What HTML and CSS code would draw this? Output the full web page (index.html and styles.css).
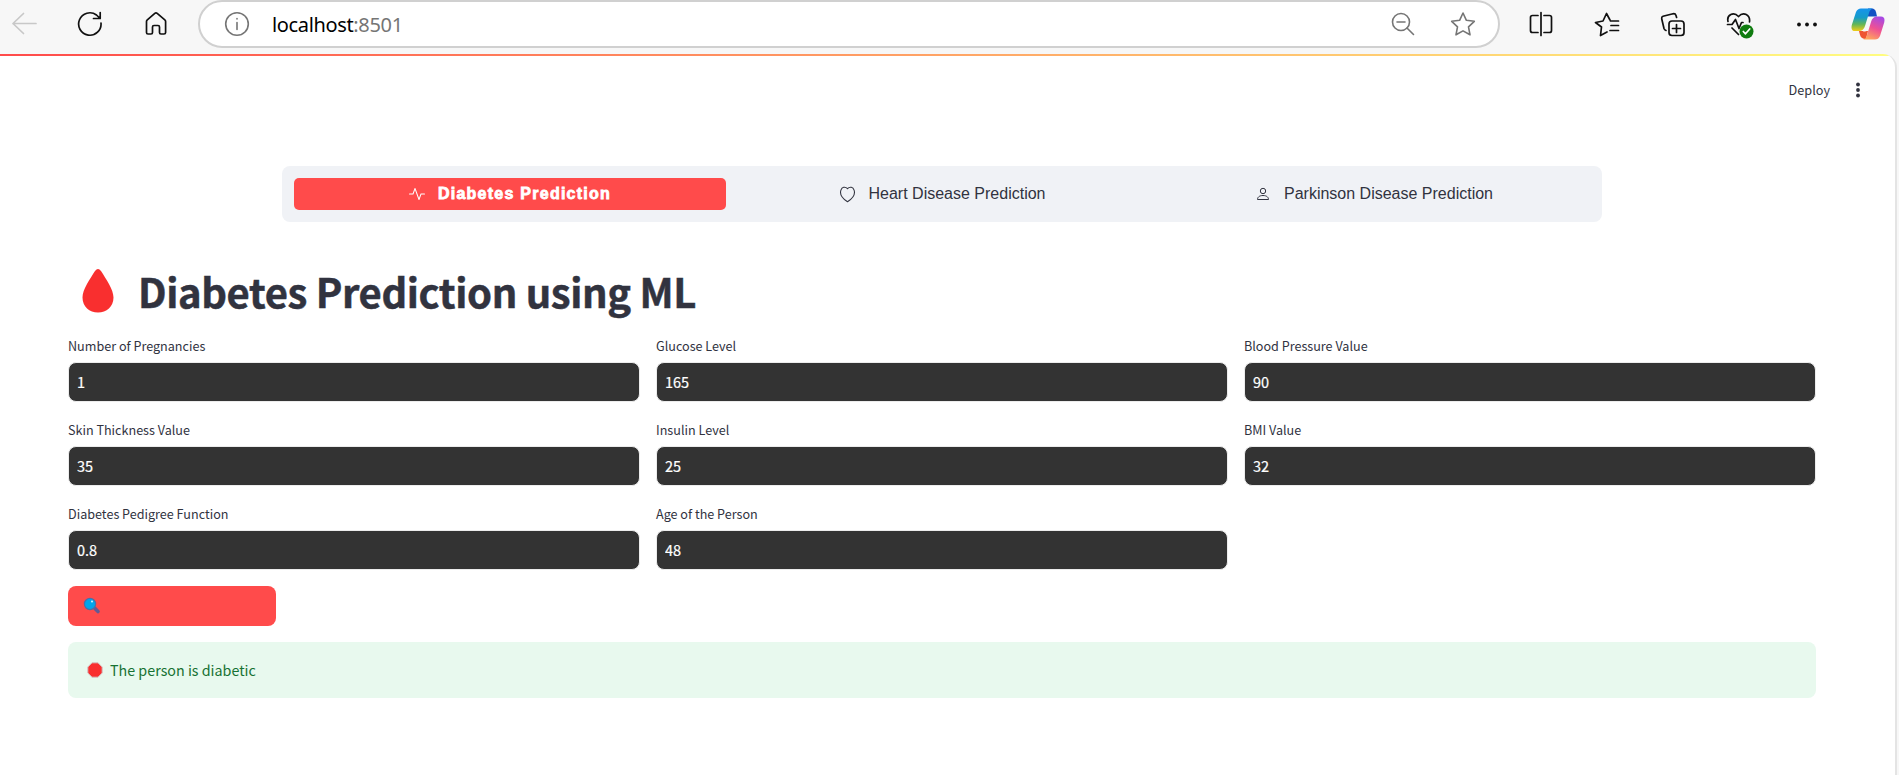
FILE: index.html
```html
<!DOCTYPE html>
<html lang="en">
<head>
<meta charset="utf-8">
<title>Diabetes Prediction</title>
<link rel="stylesheet" href="styles.css">
</head>
<body>
<header class="toolbar">
  <div class="nav-icons">
    <svg class="back" width="26" height="26" viewBox="0 0 26 26"><path d="M25 12.500H2M12.500 2.500L2 12.500l10.500 10"/></svg>
    <svg width="26" height="26" viewBox="0 0 26 26"><path d="M24 12A11.200 11.200 0 1 1 19.500 4L23 7.300M23.200 1.500V7.500H16.500"/></svg>
    <svg width="26" height="26" viewBox="0 0 26 26"><path d="M3.500 10.500Q3.500 9.500 4.300 8.800L11.800 2.300Q13 1.300 14.200 2.300L21.800 8.800Q22.600 9.500 22.600 10.500V21.500Q22.600 23 21 23H18Q16.500 23 16.500 21.500V16Q16.500 14.500 15 14.500H11Q9.500 14.500 9.500 16V21.500Q9.500 23 8 23H5Q3.500 23 3.500 21.500Z"/></svg>
  </div>
  <div class="address">
    <svg class="grey" width="26" height="26" viewBox="0 0 26 26"><circle cx="13" cy="13" r="11.300"/><path d="M13 11.500v7M13 7.500v.5"/></svg>
    <span class="url">localhost<span class="port">:8501</span></span>
    <svg class="grey zoomout" width="26" height="26" viewBox="0 0 26 26"><circle cx="11" cy="11" r="8.500"/><path d="M7 11h8M17 17l6.500 6.500"/></svg>
    <svg class="grey star" width="26" height="26" viewBox="0 0 26 26"><path d="M13 2l3.400 7.300 7.900 1-5.800 5.500 1.500 8-7-3.900-7 3.900 1.500-8-5.800-5.500 7.900-1z"/></svg>
  </div>
  <div class="tools">
    <svg width="26" height="26" viewBox="0 0 26 26"><path d="M10 4.500H4.500Q2.500 4.500 2.500 6.500V19.500Q2.500 21.500 4.500 21.500H10M13 1.500v23M16 4.500h5.500Q23.500 4.500 23.500 6.500V19.500Q23.500 21.500 21.500 21.500H16"/></svg>
    <svg width="26" height="26" viewBox="0 0 26 26"><path d="M16.500 10H24.500M17 14.500H24.500M16 19.500H24.500M13 21l-6.500 3.500 1-8.500L1.500 11.500l7.500-1.500L12.500 2.500L16 9"/></svg>
    <svg width="26" height="26" viewBox="0 0 26 26"><rect x="9" y="10" width="15" height="14.500" rx="3"/><path d="M16.500 13.500v8M12.500 17.500h8M6 19.500Q4.500 19 4 17.500L1.700 7.800Q1.300 6 3 5.300L13 2.800Q15.300 2.300 16 4.500L16.600 6.500"/></svg>
    <svg width="28" height="28" viewBox="0 0 28 28"><path d="M2 10.500C.5 4 7.500 0 12.500 5.500C17.500 0 24.500 4 23.500 11M1.500 13.500H6L9.500 8.500 13 17.500 15.500 11.500H17M6 17L12.500 23.500"/><circle class="ok" cx="20.500" cy="20.500" r="7"/><path class="tick" d="M17.300 20.500l2.200 2.300 4.200-4.800"/></svg>
    <svg class="dots" width="26" height="26" viewBox="0 0 26 26"><circle cx="5" cy="13.500" r="1.900"/><circle cx="13" cy="13.500" r="1.900"/><circle cx="21" cy="13.500" r="1.900"/></svg>
    <svg class="copilot" width="34" height="32" viewBox="0 0 34 32">
      <defs>
        <linearGradient id="cool" x1="0" y1="0" x2="0" y2="1"><stop offset="0" stop-color="#1693ed"/><stop offset=".4" stop-color="#169cc8"/><stop offset=".7" stop-color="#62b658"/><stop offset="1" stop-color="#f2cc16"/></linearGradient>
        <linearGradient id="warm" x1=".7" y1="0" x2=".3" y2="1"><stop offset="0" stop-color="#a849e3"/><stop offset=".5" stop-color="#ef5193"/><stop offset="1" stop-color="#ffa75b"/></linearGradient>
      </defs>
      <path fill="#1250c4" d="M17 .5H21Q24 .5 25 4L26 8.500H17Z"/>
      <path fill="#ee5432" d="M8 23H17L15 31Q10 31 9 27Z"/>
      <path fill="url(#cool)" d="M10 .5H22Q19 1 18 5L14 18Q12.500 23 8 23H4Q-.5 23 .8 17L5 4Q6.500 .5 10 .5Z"/>
      <path fill="url(#warm)" d="M24 31.500H12Q15 31 16 27L20 14Q21.500 8.500 26 8.500H30Q34.500 8.500 33.200 14.500L29 28Q27.500 31.500 24 31.500Z"/>
      <path fill="#f7f7f7" d="M18 9H22Q19.800 10.500 19 14L16.500 22Q15.800 23.500 12 23.500Q14 22 15 18Z"/>
    </svg>
  </div>
</header>
<main class="page">
  <div class="rainbow"></div>
  <div class="app-bar">
    <span class="deploy">Deploy</span>
    <svg width="6" height="16" viewBox="0 0 6 16"><circle cx="3" cy="2.500" r="1.900"/><circle cx="3" cy="8" r="1.900"/><circle cx="3" cy="13.500" r="1.900"/></svg>
  </div>
  <nav class="tabs">
    <a class="tab active"><svg width="16" height="16" viewBox="0 0 16 16"><path fill="currentColor" d="M6 2a.5.5 0 0 1 .47.33L10 12.040l1.530-4.210A.5.5 0 0 1 12 7.500h3.500a.5.5 0 0 1 0 1h-3.150l-1.880 5.170a.5.5 0 0 1-.94 0L6 3.960 4.470 8.170A.5.5 0 0 1 4 8.500H.5a.5.5 0 0 1 0-1h3.150l1.880-5.170A.5.5 0 0 1 6 2"/></svg><span>Diabetes Prediction</span></a>
    <a class="tab heart"><svg width="17" height="17" viewBox="0 0 16 16"><path class="line" d="M8 14.800C-4 7 3.500-2.500 8 2.500C12.500-2.500 20 7 8 14.800Z"/></svg><span>Heart Disease Prediction</span></a>
    <a class="tab person"><svg width="16" height="16" viewBox="0 0 16 16"><circle class="line" cx="8" cy="5" r="2.700"/><path class="line" d="M2.500 13.500C2.500 11.500 4 9.500 8 9.500S13.500 11.500 13.500 13.500Z"/></svg><span>Parkinson Disease Prediction</span></a>
  </nav>
  <section class="content">
    <h1 class="title"><svg width="34" height="46" viewBox="0 0 34 46"><path fill="#f92f2f" d="M14 3Q17-1 20 3C25 11 32.500 21.500 32.500 29.500C32.500 38.500 25.500 44.500 17 44.500S1.500 38.500 1.500 29.500C1.500 21.500 9 11 14 3Z"/></svg><span>Diabetes Prediction using ML</span></h1>
    <div class="fields">
      <label class="field"><span>Number of Pregnancies</span><input value="1"></label>
      <label class="field"><span>Glucose Level</span><input value="165"></label>
      <label class="field"><span>Blood Pressure Value</span><input value="90"></label>
      <label class="field"><span>Skin Thickness Value</span><input value="35"></label>
      <label class="field"><span>Insulin Level</span><input value="25"></label>
      <label class="field"><span>BMI Value</span><input value="32"></label>
      <label class="field"><span>Diabetes Pedigree Function</span><input value="0.8"></label>
      <label class="field"><span>Age of the Person</span><input value="48"></label>
    </div>
    <button class="predict" aria-label="Predict"><svg width="18" height="18" viewBox="0 0 18 18"><path d="M11.500 11L15 14.500" stroke="#635994" stroke-width="3.600" stroke-linecap="round"/><circle cx="7" cy="7" r="5.600" fill="#00a6ed" stroke="#4a6fa8" stroke-width="1.200"/><circle cx="9" cy="4.500" r="1" fill="#d5f3ff"/></svg></button>
    <div class="alert"><svg width="16" height="16" viewBox="0 0 16 16"><path fill="#f92f2f" stroke="#d3c4c4" stroke-width="1" d="M5 .8h6L15.200 5v6L11 15.200H5L.8 11V5z"/></svg><span>The person is diabetic</span></div>
  </section>
</main>
</body>
</html>
```

FILE: styles.css
```css
* { box-sizing: border-box; }
body {
  margin: 0;
  width: 1899px;
  height: 775px;
  overflow: hidden;
  background: #f7f7f7;
  color: #31333f;
  font-family: "Noto Sans CJK SC", "Noto Sans", sans-serif;
}
svg { display: block; flex: none; fill: none; }
.toolbar { display: flex; height: 54px; }
.toolbar svg { stroke: #111; stroke-width: 1.7; stroke-linecap: round; stroke-linejoin: round; }
.toolbar .back { stroke: #c8c8c8; }
.toolbar .grey { stroke: #757575; stroke-width: 1.6; }
.nav-icons { display: flex; gap: 40px; width: 198px; padding: 11px 0 0 11px; }
.address {
  display: flex;
  align-items: center;
  width: 1302px;
  height: 48px;
  padding: 0 22px 0 24px;
  border: 2px solid #d0d0d0;
  border-radius: 24px;
  background: #fff;
}
.url { margin-left: 22px; color: #000; font: 20px "Noto Sans", sans-serif; letter-spacing: -.35px; }
.port { color: #757575; }
.zoomout { margin-left: auto; }
.star { margin-left: 34px; }
.tools { display: flex; gap: 40px; padding: 11px 0 0 28px; }
.tools .dots { fill: #111; stroke: none; }
.tools .ok { fill: #107c10; stroke: none; }
.tools .tick { stroke: #fff; }
.tools .copilot { stroke: none; margin: -3px 0 0 -9px; }
.page {
  width: 1897px;
  height: 722px;
  overflow: hidden;
  border-right: 2px solid #e4e4e4;
  border-radius: 0 14px 0 0;
  background: #fff;
}
.rainbow { height: 2px; background: linear-gradient(90deg, #ff4b4b, #fffd80); }
.app-bar {
  display: flex;
  align-items: center;
  justify-content: flex-end;
  gap: 25px;
  height: 68px;
  padding-right: 34px;
  font-size: 12.700px;
}
.deploy { margin-top: -2px; }
.app-bar svg { fill: #31333f; }
.tabs {
  display: grid;
  grid-template-columns: repeat(3, 1fr);
  width: 1320px;
  height: 56px;
  margin: 42px 0 0 282px;
  padding: 12px;
  border-radius: 8px;
  background: #f0f2f6;
  font: 16px "Liberation Sans", Arial, sans-serif;
}
.tab { display: flex; align-items: center; justify-content: center; gap: 13px; border-radius: 5px; }
.active { background: #ff4b4b; color: #fff; font-weight: 700; -webkit-text-stroke: .8px #fff; }
.active span { letter-spacing: 1.250px; }
.active svg { -webkit-text-stroke: 0; }
.line { stroke: #31333f; stroke-width: 1; }
.content { width: 1748px; margin-left: 68px; }
.title {
  display: flex;
  align-items: center;
  gap: 23px;
  height: 66px;
  margin: 36px 0 0;
  padding-left: 13px;
  font-size: 40px;
  font-weight: 700;
  line-height: 1;
  letter-spacing: -.38px;
  -webkit-text-stroke: .5px #31333f;
}
.fields { display: grid; grid-template-columns: repeat(3, 1fr); gap: 16px; margin-top: 10px; }
.field { display: block; height: 68px; }
.field span { display: block; height: 28px; font-size: 12.600px; line-height: 24px; }
.field input {
  display: block;
  width: 100%;
  height: 40px;
  padding: 0 8px 1px;
  border: 1px solid #ececec;
  border-radius: 8px;
  background: #333;
  color: #fff;
  font: 14.500px "Noto Sans CJK SC", sans-serif;
  -webkit-text-stroke: .2px #fff;
}
.predict {
  display: flex;
  align-items: center;
  width: 208px;
  height: 40px;
  margin-top: 16px;
  padding: 0 15px;
  border: 0;
  border-radius: 8px;
  background: #ff4b4b;
}
.alert {
  display: flex;
  align-items: center;
  gap: 7px;
  height: 56px;
  margin-top: 16px;
  padding-left: 19px;
  border-radius: 8px;
  background: #e8f9ee;
  color: #177233;
  font-size: 14.300px;
}
.alert span { margin-top: -1px; }
```
